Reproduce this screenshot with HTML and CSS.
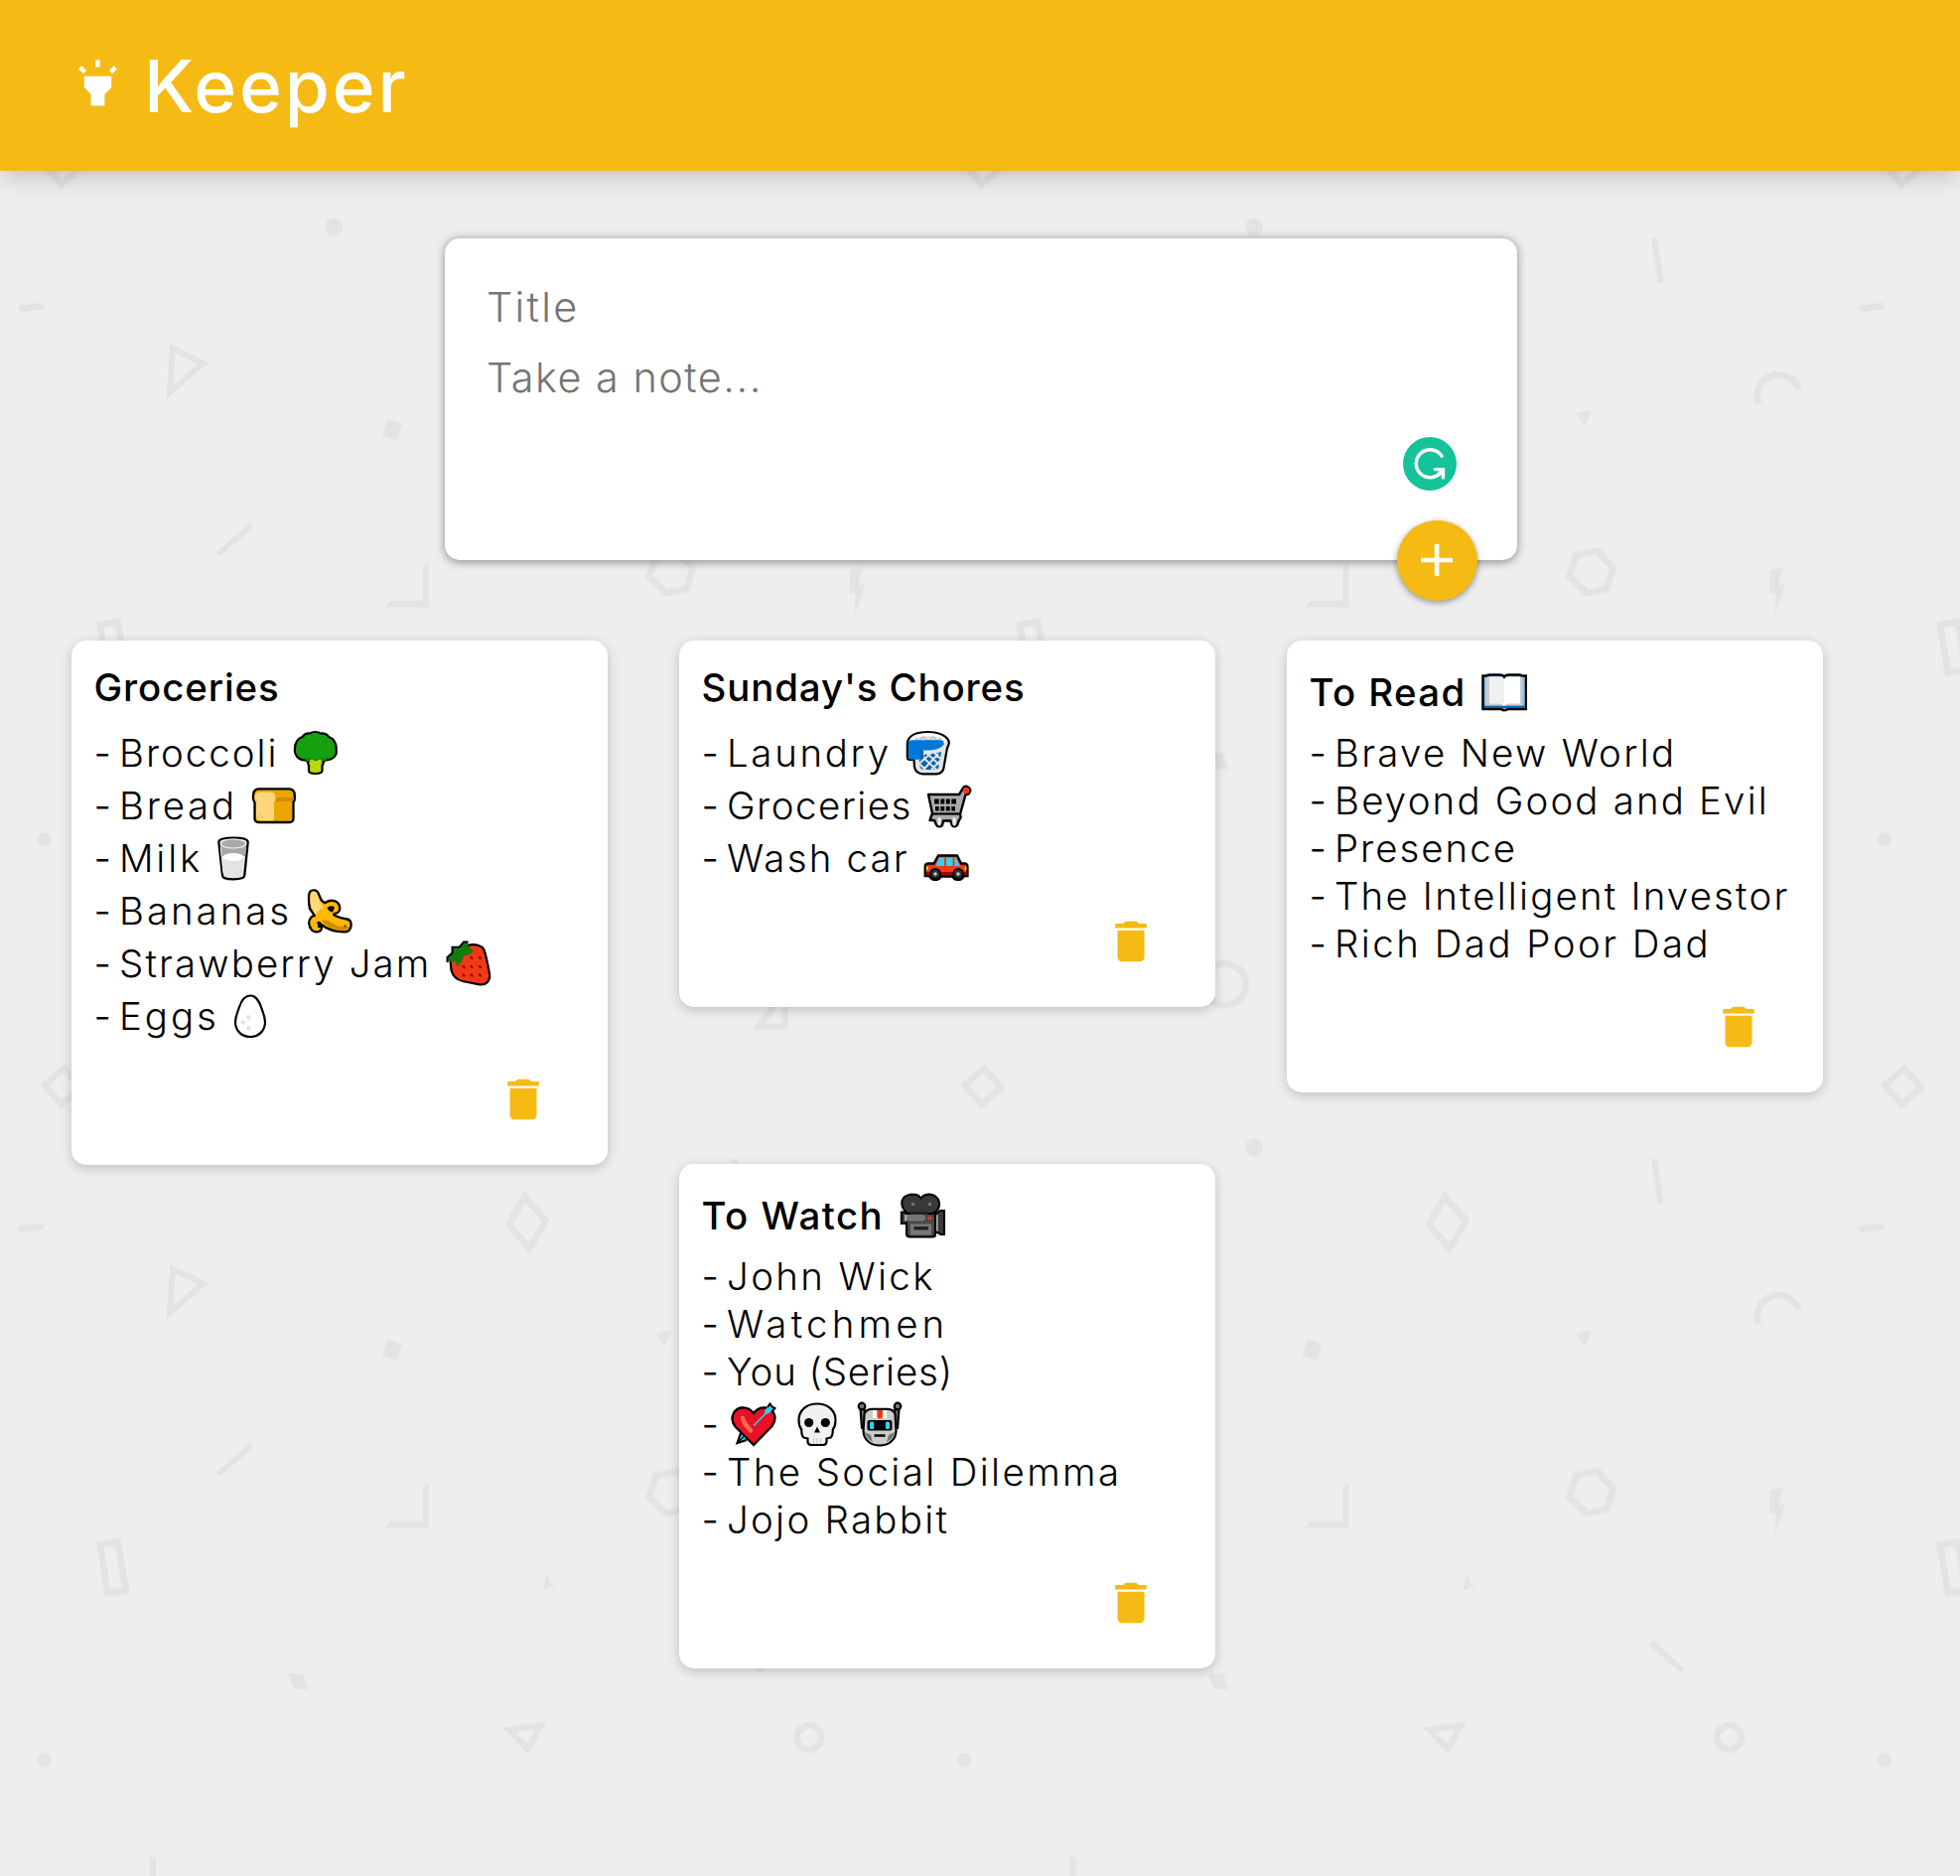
FILE: index.html
```html
<!DOCTYPE html>
<html lang="en">
<head>
<meta charset="utf-8">
<title>Keeper</title>
<link rel="stylesheet" href="styles.css">
</head>
<body>
<svg class="backdrop" aria-hidden="true">
  <defs>
    <pattern id="confetti" width="926.7" height="926.7" patternUnits="userSpaceOnUse">
      <g fill="none" stroke="#e3e3e3" stroke-width="6.8" stroke-miterlimit="8">
        <path d="M64.6 149L81.7 168.6 61.7 185.4 45.2 166Z"/>
        <path d="M19.3 311L43.8 308"/>
        <path d="M173.8 351L204.7 365.8 171 395Z" stroke-width="6"/>
        <path d="M220 558L253 528.7" stroke-width="5.5"/>
        <path d="M100.7 629.3L118.5 626.1 126.8 674.5 108.5 677.9Z"/>
        <path d="M528.3 278.4L549.8 302.4 533.3 330.4 512.3 306.2Z"/>
        <path d="M660.6 559.3L682 554.7 698 572 691.6 592.7 671 597.3 654 580.7Z"/>
        <path d="M844.3 406.3A21.5 21.5 0 1 1 885 391.7" stroke-width="6.8"/>
        <path d="M739.3 240.3L746 284.7" stroke-width="6"/>
        <path d="M512.5 814.9L544.6 810.8 531.3 834.1Z" stroke-width="6.2"/>
        <path d="M154 16.6V60"/>
        <path d="M736.3 727L767.9 756" stroke-width="6"/>
        <circle cx="814.8" cy="822.9" r="12.3"/>
        <path d="M764 106.7H790.6V73Z" stroke-width="6.2"/>
        <circle cx="307" cy="64.500" r="21"/>
      </g>
      <g fill="#e3e3e3">
        <circle cx="336.3" cy="228.7" r="9"/>
        <path d="M390.3 422.3L405 426.7 400.3 443.3 385 438.7Z"/>
        <path d="M426 605V572L432 566V611.5H387L393 605Z"/>
        <path d="M660.2 415.8L676.5 413.4 669.4 428.7Z"/>
        <path d="M856 574.3L868.6 571.3 864.3 589 871.3 587.7 860.6 620 861.6 596.7 855.3 598Z"/>
        <path d="M550 659.8L558 671.1 546.9 674.7Z"/>
        <path d="M289.7 758.4H305.4L310.7 774.2H295.5Z"/>
        <circle cx="44.6" cy="845.6" r="7"/>
      </g>
    </pattern>
  </defs>
  <rect width="100%" height="100%" fill="url(#confetti)"/>
</svg>

<svg class="sprite" aria-hidden="true">
  <symbol id="trash" viewBox="0 0 24 24"><path d="M6 19c0 1.1.9 2 2 2h8c1.1 0 2-.9 2-2V7H6v12zM19 4h-3.5l-1-1h-5l-1 1H5v2h14V4z"/></symbol>
</svg>

<header class="topbar">
  <svg class="logo" viewBox="0 0 24 24"><path d="M6 14l3 3v5h6v-5l3-3V9H6zM11 2h2v3h-2zM3.5 5.88l1.41-1.41 2.12 2.12L5.62 8zM16.96 6.58l2.12-2.12 1.41 1.41L18.37 8z"/></svg>
  <h1 class="brand">Keeper</h1>
</header>

<form class="composer">
  <p class="field track-23">Title</p>
  <p class="field track-15">Take a note...</p>
  <svg class="grammar" viewBox="0 0 54 54"><circle cx="27" cy="27" r="27" fill="#15c39a"/><g fill="none" stroke="#fff" stroke-width="3.4" stroke-linecap="round"><path d="M39 19.2A14 14 0 1 0 38.6 35"/><path d="M32.4 32.6H40.4V41" stroke-linecap="round"/><path d="M36 37.5L40 33"/></g></svg>
  <button class="add" type="button" aria-label="Add"><svg viewBox="0 0 32 32"><path d="M13.8 0h4.6v13.8H32v4.4H18.4V32h-4.6V18.2H0v-4.4h13.8z"/></svg></button>
</form>

<main class="notes">
  <article class="note">
    <h2 class="title"><span class="track-9">Groceries</span></h2>
    <p class="row pic"><span class="dash">- </span><span class="track-20">Broccoli</span><svg class="emoji" viewBox="0 0 46 46"><path d="M14 30L16 36V41Q16 44 22.7 44T29.5 41V36L32 30Z" fill="#bad80a" stroke="#000" stroke-width="2.2"/><path d="M12 30.5C5 30 1 24.500 2 19.500C1.500 14 5 8 9.500 7C12 3.500 15 3.200 17 3.500C19.500 1.500 25.500 1.500 28 3.500C31 3 35 4.500 36 7C41 8 44 14 43.600 19.500C45 25 41 30 33.500 30.500Q23 33 12 30.500Z" fill="#16a00f" stroke="#000" stroke-width="2.200"/><path d="M11 28q4 1 6 0 6 3 11 0 4 1 7 0l-2 3.200q-10 2-20 0z" fill="#0f8210"/><path d="M17 30.500l2-1 4 2 4-2 2 1-1.200 6h-9.600z" fill="#bad80a"/><g fill="#0f7a10"><circle cx="30.500" cy="11.500" r=".8"/><circle cx="33.500" cy="11.500" r=".8"/><circle cx="33" cy="14" r=".6"/></g></svg></p>
    <p class="row pic"><span class="dash">- </span><span class="track-28">Bread</span><svg class="emoji" viewBox="0 0 46 46"><path d="M8 6.300H38Q43.800 6.300 43.800 13V16Q43.800 18.500 42.500 19.500V36Q42.500 40 38.500 40H7.500Q3.500 40 3.500 36V19.500Q2 18 2 16V13Q2 6.300 8 6.300Z" fill="#eba400" stroke="#000" stroke-width="2.300"/><path d="M25 15H43V17Q42 19 38 19H25Z" fill="#d18d00"/><path d="M8 9.500H20Q25 10 24.500 16 24.300 18.500 23 19.500V38.300H9Q5 38 5 34V20Q3.500 18.500 3.500 15 4 9.500 8 9.500Z" fill="#ffd679"/><g fill="#eba400"><circle cx="8" cy="32" r=".7"/><circle cx="8" cy="35.500" r=".7"/><circle cx="11" cy="35" r=".7"/></g></svg></p>
    <p class="row pic"><span class="dash">- </span><span class="track-28">Milk</span><svg class="emoji slim" viewBox="0 0 34 46"><path d="M2.300 7Q2.300 2.700 17 2.700T31.700 7L28.300 40.500Q28 44.300 17 44.300T6 40.500Z" fill="#e3e3e3" stroke="#000" stroke-width="2.300"/><path d="M4 10Q17 15.500 30 10L29 21H5Z" fill="#a8a8a8"/><ellipse cx="17" cy="8.500" rx="12.700" ry="4.500" fill="#a8a8a8" stroke="#f4f4f4" stroke-width="1.100"/><ellipse cx="17" cy="22" rx="10.500" ry="4" fill="#fff"/><path d="M4.200 12L6.900 38" stroke="#fff" stroke-width=".8"/></svg></p>
    <p class="row pic"><span class="dash">- </span><span class="track-30">Bananas</span><svg class="emoji" viewBox="0 0 46 46"><path d="M3 21C1.500 14 2 9 2.300 6.500C3 1 10.500 1 11.800 6L14.500 12Q17 15 18.500 15C23 11.500 30 12 32.500 17C34.500 22 32 25.500 28.500 25.800Q26.500 26.500 27.500 27.500Q34 31 40.500 31.500C45 32 45.500 38 43.500 41.500Q42 44.500 38 44.300C29 44.500 21 42 14.500 37Q15.500 40 14 43Q9 46 5 42.500C1.500 38 1.300 33 4.500 29.500Q6 28 8 28Z" fill="#ffb900" stroke="#000" stroke-width="2.300" stroke-linejoin="round"/><path d="M9 27.500C3.800 20 3 13 3.500 7.500C4 2.500 9 2.300 10.500 6.500C13 15 16 19 17.500 19.500Q11 22 9 27.500Z" fill="#ffd679"/><path d="M14.500 33Q20 31 25 35 33 41 42.500 38.500Q42.500 43 38 43 22 42.500 14.500 33Z" fill="#d18d00"/><path d="M20.500 20Q24 17 28 19.500L26 24.500Q22 24 20.500 20ZM10 35Q11.500 32.500 14.500 35L16 40H11Q12 37 10 35Z"/><circle cx="38.500" cy="38.500" r="1.500" fill="#8e562e"/></svg></p>
    <p class="row pic"><span class="dash">- </span><span class="track-21">Strawberry Jam</span><svg class="emoji" viewBox="0 0 46 46"><path d="M22 5C29 3 36.500 5 38.500 9.500C40 13 43.500 29 44.200 35.500C44.500 41 40 45.500 34 44.300L17 41Q8 39 5.500 30L4.500 20Z" fill="#f03a17" stroke="#000" stroke-width="2.200"/><path d="M18 2L22.500 1.500L22 5.500L27.500 10Q25 15.500 18.500 15L15.500 21.500L11.500 27L10 21H2V17.500L6.500 12.500L6.500 7.500H13.500Z" fill="#107c10"/><path d="M22.500 1.500H18L13.500 6.800H6.500V12.500L1.500 17V22" fill="none" stroke="#000" stroke-width="2"/><g stroke="#a80000" stroke-width="2.400" stroke-linecap="round"><path d="M25.500 17l1 1M34 17l1 1M25.500 26l1 1M34 26l1 1M17.500 26l1 1M17.500 34.500l1 1M25.500 34.500l1 1M34 34.500l1 1"/></g></svg></p>
    <p class="row pic"><span class="dash">- </span><span class="track-30">Eggs</span><svg class="emoji slim" viewBox="0 0 34 46"><path d="M17 2.500C22 2.500 25.500 6.500 28 14C29.500 19 32 23 32 29C32 38 25.500 44 17 44S2 38 2 29C2 23 4.500 19 6 14C8.500 6.500 12 2.500 17 2.500Z" fill="#fff" stroke="#000" stroke-width="2.200"/><g fill="#e3e3e3"><circle cx="15.500" cy="24.500" r="2.200"/><circle cx="9.800" cy="29.500" r="2.200"/><circle cx="15.500" cy="35.500" r="2.200"/></g></svg></p>
    <svg class="trash"><use href="#trash"/></svg>
  </article>

  <article class="note">
    <h2 class="title"><span class="track-9">Sunday's Chores</span></h2>
    <p class="row pic"><span class="dash">- </span><span class="track-27">Laundry</span><svg class="emoji" viewBox="0 0 46 46"><path d="M1.800 14C2 5 12 2 22.500 2S44 6 43.800 13.500L41.800 19L38.500 38Q37.500 44 31 44.300H17.500Q10.500 44 9 37.500L8.500 30H4Q2 30 1.800 27.500Z" fill="#e3e3e3" stroke="#000" stroke-width="2.200"/><path d="M5 12Q10 4.500 23 4.500T41 12" fill="none" stroke="#fff" stroke-width="2.500"/><path d="M10 8l4 3 4-4 5 4 5-4 4 4 4-3" fill="none" stroke="#bbb" stroke-width="1.300"/><path d="M13 23Q25 26 36 22L33.500 37Q33 40 29 40H19Q15 40 14.500 37Z" fill="#0063b1"/><path d="M15 25l16 15M21 23l13 12M29 23l6 6M13 33l7 7M33 24L18 40M26 23L13.500 34M20 23l-6 6M36 30L26 40" stroke="#e3e3e3" stroke-width="2"/><path d="M3 13Q3 10.300 6 10.300H36Q39.500 11 38.500 15 34 20 24 20.500H17V26Q17 29.700 12 29.700H5Q3 29.700 3 27Z" fill="#0078d7"/><path d="M15 20.500h3V29h-3z" fill="#0063b1"/></svg></p>
    <p class="row pic"><span class="dash">- </span><span class="track-15">Groceries</span><svg class="emoji" viewBox="0 0 46 46"><path d="M2 12H33L37 5.500Q39 2.500 42 4.500 46 7 43 11Q41 12.500 39.500 12L34 32Q35.500 36 33 37.500L31 43Q28 46 25.500 42.500L24.500 38.500H17L16 43Q12.500 46 10 42.500L8 38H3.500L6 31Z" fill="#ababab" stroke="#000" stroke-width="2.400" stroke-linejoin="round"/><path d="M5.500 31.500H33" stroke="#000" stroke-width="2.200"/><circle cx="40" cy="8" r="3.200" fill="#f03a17"/><path d="M8 16.500h22v5H8zM9 24h20v4.500H9z"/><path d="M13.500 15v15M19 15v15M24.500 15v15" stroke="#ababab" stroke-width="1.600"/><path d="M13 36.500V42M28 36.500V42" stroke="#eee" stroke-width="3" stroke-linecap="round"/></svg></p>
    <p class="row pic"><span class="dash">- </span><span class="track-22">Wash car</span><svg class="emoji" viewBox="0 0 46 46"><path d="M15 20.500H34L38 28.500H42Q44.500 29 44.500 32V41H41Q39 45 35 45T29 41.500H18Q16 45 12 45T6 41H1.700V31Q2 28.500 5 28.500H10.500Z" fill="#f03a17" stroke="#000" stroke-width="2.300"/><path d="M3 37H43.500V40H3Z" fill="#a80000"/><path d="M16 22.500H21V31H12.500ZM23 22.500H29.500V31H23ZM31.500 22.500H33L36.500 31H31.500Z" fill="#31d2f7"/><path d="M3 31.500h1.500v3.500H3zM41.800 31.500h1.500v3.500h-1.500z" fill="#fff100"/><circle cx="12" cy="39" r="5" fill="#333" stroke="#000" stroke-width="2"/><circle cx="35" cy="39" r="5" fill="#333" stroke="#000" stroke-width="2"/><circle cx="12" cy="39" r="1.700" fill="#ccc"/><circle cx="35" cy="39" r="1.700" fill="#ccc"/></svg></p>
    <svg class="trash"><use href="#trash"/></svg>
  </article>

  <article class="note">
    <h2 class="title pic"><span class="track-14">To Read</span><svg class="emoji" viewBox="0 0 46 46"><path d="M1.500 6.500H5Q6 5.500 9 5.500H18Q22 5.500 23 7.500Q24 5.500 28 5.500H37Q40 5.500 41 6.500H45V40H27Q23 42.500 20 40H1.500Z" fill="#83beec" stroke="#000" stroke-width="2.500"/><path d="M3 36.500H43.500V39H3Z" fill="#0063b1"/><path d="M4.500 8H8V34H38V8H41.500V36.500H4.500Z" fill="#ccc"/><path d="M8 7.500H18Q22 7.500 23 10V37Q21 34.500 17 34.500H8Z" fill="#f0f0f0"/><path d="M23 10Q24 7.500 28 7.500H39V34.500H28Q24 35 23 37Z" fill="#fff"/></svg></h2>
    <p class="row"><span class="dash">- </span><span class="track-23">Brave New World</span></p>
    <p class="row"><span class="dash">- </span><span class="track-22">Beyond Good and Evil</span></p>
    <p class="row"><span class="dash">- </span><span class="track-20">Presence</span></p>
    <p class="row"><span class="dash">- </span><span class="track-22">The Intelligent Investor</span></p>
    <p class="row"><span class="dash">- </span><span class="track-25">Rich Dad Poor Dad</span></p>
    <svg class="trash"><use href="#trash"/></svg>
  </article>

  <article class="note">
    <h2 class="title pic"><span class="track-15">To Watch</span><svg class="emoji" viewBox="0 0 46 46"><path d="M36 22L41 18H45V42H41.500L36 39Z" fill="#393939" stroke="#000" stroke-width="2"/><path d="M38.500 22V39L36 38V23Z" fill="#ccc"/><path d="M1.800 19.500H8V31H1.800Z" fill="#393939" stroke="#000" stroke-width="2"/><path d="M7 19H36V42Q36 44.500 33 44.500H10.500Q7 44.500 7 41Z" fill="#4c4a48" stroke="#000" stroke-width="2.200"/><path d="M13 1.500Q19 1.500 21.500 5.500 24.500 1.500 30 1.500C38 2 42 9 39 16Q37 20 33 21H9C2 17 0 9 5 4Q9 1.300 13 1.500Z" fill="#393939" stroke="#000" stroke-width="2"/><path d="M11 19h18v3H11z" fill="#222"/><path d="M6 22H23Q26 22.500 26 25T23 28.500H6Z" fill="#767676"/><path d="M6 22v6.500" stroke="#ccc" stroke-width="1.500"/><path d="M11 31.500H32V42.500H11Z" fill="#767676"/><path d="M14.500 34H29V37.500H14.500Z" fill="#222"/><circle cx="30.500" cy="25.500" r="1.800" fill="#f03a17"/><circle cx="13.500" cy="11.500" r="1.800" fill="#767676"/><circle cx="30.500" cy="11.500" r="1.800" fill="#767676"/></svg></h2>
    <p class="row"><span class="dash">- </span><span class="track-24">John Wick</span></p>
    <p class="row"><span class="dash">- </span><span class="track-42">Watchmen</span></p>
    <p class="row"><span class="dash">- </span><span class="track-9">You (Series)</span></p>
    <p class="row pic trio"><span class="dash">- </span><svg class="emoji" viewBox="0 0 46 46"><path d="M10 32L6.500 42L16 39" fill="#31d2f7" stroke="#000" stroke-width="2.200"/><path d="M23 44L4.500 25.500C-1.500 18 2 8 10.500 6.500Q18 5.500 23 12Q28 5.500 35 6.500C44 8 47.500 17 41.500 25Z" fill="#e81224" stroke="#000" stroke-width="2.300"/><path d="M12 17Q13 22 20 29.500" fill="none" stroke="#f96b50" stroke-width="4.500" stroke-linecap="round"/><path d="M23 24.500L38 9.500" stroke="#31d2f7" stroke-width="1.500"/><path d="M33.500 13.500L35 8L39.500 3.500L40.500 6.500 43.500 7.500 38.500 12Z" fill="#31d2f7"/><path d="M37 6L39.500 2.500L41.500 5.500L44.500 7L42 9.500" fill="none" stroke="#000" stroke-width="2"/><path d="M6.500 42L13 35.500" stroke="#000" stroke-width="1.200"/></svg><svg class="emoji" viewBox="0 0 46 46"><path d="M23 2.500C34 2.500 41.500 9.500 41.500 19Q41.500 25 38.800 28.500Q38.800 35 36.500 36.500L32.500 37.500V41Q32 44 28 44H18Q14 44 13.500 41V37.500L9.500 36.500Q7.200 35 7.200 28.500Q4.500 25 4.500 19C4.500 9.500 12 2.500 23 2.500Z" fill="#f0f0f0" stroke="#000" stroke-width="2.200"/><circle cx="14.700" cy="21.500" r="4.600"/><circle cx="31.300" cy="21.500" r="4.600"/><path d="M23 25.500L26 31.500H20Z"/><path d="M19.500 37v6M23 37v6M26.500 37v6" stroke="#ccc" stroke-width="1.200"/></svg><svg class="emoji" viewBox="0 0 46 46"><g fill="#767676" stroke="#000" stroke-width="2.200"><path d="M3.500 7H7.500L9 27H5ZM42.500 7H38.500L37 27H41Z"/><circle cx="5" cy="5" r="3.300"/><circle cx="41" cy="5" r="3.300"/></g><path d="M15 7.800H31Q37 8 38.500 13L39.500 30C39 40 31 44.500 23 44.500S7 40 6.500 30L7.500 13Q9 8 15 7.800Z" fill="#ccc" stroke="#000" stroke-width="2.200"/><path d="M16 9H30V17H16Z" fill="#fff"/><path d="M20.300 9H26V15Q26 17.500 23.200 17.500T20.300 15Z" fill="#f03a17"/><path d="M8 31L14 34 16 41Q9.500 38 8 31ZM38 31L32 34 30 41Q36.500 38 38 31Z" fill="#767676"/><rect x="10.500" y="19" width="25" height="10.500" rx="2"/><rect x="13" y="20.500" width="4.200" height="7.500" rx="1.500" fill="#31d2f7"/><rect x="28.800" y="20.500" width="4.200" height="7.500" rx="1.500" fill="#31d2f7"/><path d="M17.500 34.500H28.500" stroke="#000" stroke-width="2.500"/></svg></p>
    <p class="row"><span class="dash">- </span><span class="track-24">The Social Dilemma</span></p>
    <p class="row"><span class="dash">- </span><span class="track-23">Jojo Rabbit</span></p>
    <svg class="trash"><use href="#trash"/></svg>
  </article>
</main>
</body>
</html>
```
FILE: styles.css
```css
* { box-sizing: border-box; }

html { height: 100%; overflow: hidden; }

body {
  margin: 0;
  min-height: 1889px;
  background: #eee;
  color: #000;
  font-family: Inter, "Open Sans", sans-serif;
  position: relative;
}

.backdrop {
  position: absolute;
  inset: 0;
  width: 100%;
  height: 100%;
  z-index: -1;
}

.sprite { display: none; }

/* Header */
.topbar {
  display: flex;
  height: 172px;
  padding: 43px 0 0 71px;
  background: #f5ba13;
  box-shadow: 0 0 28px rgba(0, 0, 0, .28);
}

.logo {
  width: 55px;
  height: 55px;
  margin-top: 13.4px;
  fill: #fff;
}

.brand {
  margin: 1px 0 0 19px;
  color: #fff;
  font-size: 73px;
  font-weight: 500;
  line-height: 86px;
  letter-spacing: 2.9px;
}

/* New note form */
.composer {
  position: relative;
  width: 1080px;
  height: 324px;
  margin: 68px 0 0 448px;
  padding: 42.5px 0 0 42px;
  border-radius: 15px;
  background: #fff;
  box-shadow: 0 1.5px 10px #8a8989;
}

.field {
  margin: 0 0 19px;
  color: #757575;
  font-size: 41.4px;
  font-weight: 300;
  line-height: 52px;
}

.grammar {
  position: absolute;
  top: 200px;
  right: 61px;
  width: 54px;
  height: 54px;
}

.add {
  position: absolute;
  right: 40px;
  bottom: -41px;
  display: grid;
  place-items: center;
  width: 81px;
  height: 81px;
  padding: 0 1px 1px 0;
  border: 0;
  border-radius: 50%;
  background: #f5ba13;
  box-shadow: 0 2px 6px rgba(0, 0, 0, .4);
}

.add svg { width: 32px; height: 32px; fill: #fff; }

/* Notes */
.notes {
  padding: 45px 36px 0;
}

.note {
  float: left;
  display: flex;
  flex-direction: column;
  width: 540px;
  margin: 36px;
  padding: 22.5px 22.5px 39px;
  border-radius: 15px;
  background: #fff;
  box-shadow: 0 3px 12px rgba(0, 0, 0, .2);
}

.title,
.row {
  height: 48px;
  margin: 0;
  font-size: 38.4px;
  font-weight: 300;
  line-height: 48px;
  white-space: nowrap;
}

.title {
  margin-bottom: 13.5px;
  font-weight: 500;
}

.pic { height: 53px; padding-top: 5px; }

.dash {
  display: inline-block;
  width: 25.5px;
  white-space: pre;
}

.emoji {
  width: 46px;
  height: 46px;
  margin-left: 14.5px;
  vertical-align: -9px;
}

.slim { width: 34px; margin-left: 14px; }
.title .emoji { margin-left: 15.5px; }
.trio .emoji { margin-left: 17.5px; }
.trio .dash + .emoji { margin-left: 4px; }

.trash {
  align-self: flex-end;
  width: 54px;
  height: 54px;
  margin: 33px 35.5px 0 0;
  fill: #f5ba13;
}

/* Tracking steps, tenths of a pixel */
.track-9 { letter-spacing: .9px; }
.track-14 { letter-spacing: 1.4px; }
.track-15 { letter-spacing: 1.5px; }
.track-20 { letter-spacing: 2px; }
.track-21 { letter-spacing: 2.15px; }
.track-22 { letter-spacing: 2.2px; }
.track-23 { letter-spacing: 2.3px; }
.track-24 { letter-spacing: 2.4px; }
.track-25 { letter-spacing: 2.5px; }
.track-27 { letter-spacing: 2.7px; }
.track-28 { letter-spacing: 2.8px; }
.track-30 { letter-spacing: 3px; }
.track-42 { letter-spacing: 4.2px; }
```
